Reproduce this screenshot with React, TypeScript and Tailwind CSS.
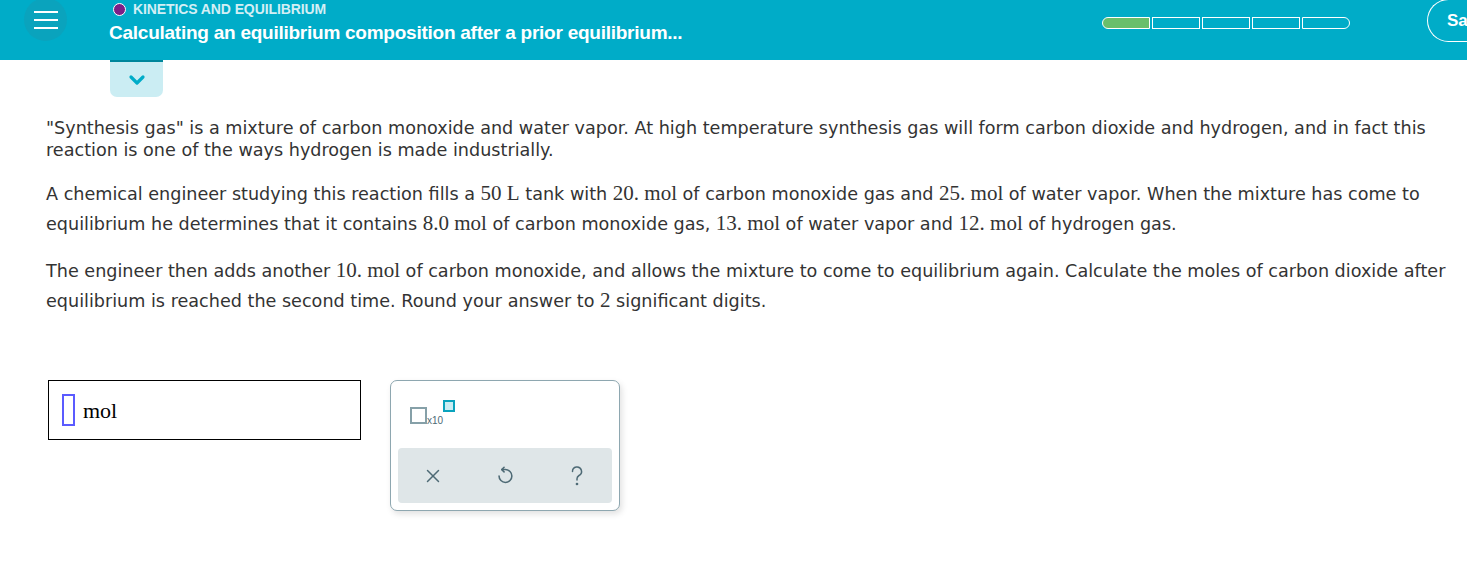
import { ChevronDown, X } from 'lucide-react';

const serif = "[font-family:'Liberation_Serif',serif] text-[21px] leading-none text-[#333]";

function M({ children }: { children: React.ReactNode }) {
  return <span className={serif}>{children}</span>;
}

export default function App() {
  return (
    <div className="min-h-[562px] w-full overflow-hidden bg-white">
      {/* top bar */}
      <header className="flex h-[60px] items-start bg-[#00acc8] [font-family:'Liberation_Sans',sans-serif]">
        <div className="ml-[24px] -mt-[2px] flex h-[43px] w-[43px] items-center justify-center rounded-full bg-[#0aa3bd]">
          <div className="flex flex-col gap-[6px]">
            <span className="block h-[2px] w-[24px] bg-white" />
            <span className="block h-[2px] w-[24px] bg-white" />
            <span className="block h-[2px] w-[24px] bg-white" />
          </div>
        </div>
        <div className="ml-[42px] pt-[1px]">
          <div className="flex items-center gap-[7px] pl-[4px]">
            <span className="block h-[13px] w-[13px] rounded-full border border-white bg-[#7b1f87]" />
            <span className="text-[14px] font-bold leading-[16px] tracking-[-0.1px] text-[#d3eff5]">KINETICS AND EQUILIBRIUM</span>
          </div>
          <div className="mt-[5px] text-[19px] font-bold leading-[22px] tracking-[-0.25px] text-white">
            Calculating an equilibrium composition after a prior equilibrium...
          </div>
        </div>
        <div className="ml-auto mt-[17px] flex h-[12px] gap-[2px]">
          <span className="block h-full w-[48px] rounded-l-full border border-white bg-[#68bf6b]" />
          <span className="block h-full w-[48px] border border-white" />
          <span className="block h-full w-[48px] border border-white" />
          <span className="block h-full w-[48px] border border-white" />
          <span className="block h-full w-[48px] rounded-r-full border border-white" />
        </div>
        <div className="ml-[77px] -mt-[1px] flex h-[43px] w-[40px] items-center rounded-l-full border border-r-0 border-white pl-[19px] text-[17px] font-bold text-white">
          Sa
        </div>
      </header>

      {/* dropdown tab */}
      <div className="ml-[110px] flex h-[37px] w-[53px] items-center justify-center rounded-b-[7px] border-t-2 border-[#00869b] bg-[#cbedf3]">
        <ChevronDown className="h-[24px] w-[24px] text-[#00acc8]" strokeWidth={3.2} />
      </div>

      {/* question text */}
      <div className="pl-[46px] pr-[4px] pt-[20px] text-[17.6px] text-[#333] [font-family:'DejaVu_Sans',sans-serif]">
        <p className="leading-[22px]">
          "Synthesis gas" is a mixture of carbon monoxide and water vapor. At high temperature synthesis gas will form carbon dioxide and hydrogen, and in fact this reaction is one of the ways hydrogen is made industrially.
        </p>
        <p className="mt-[18px] leading-[30px]">
          A chemical engineer studying this reaction fills a <M>50 L</M> tank with <M>20. mol</M> of carbon monoxide gas and <M>25. mol</M> of water vapor. When the mixture has come to equilibrium he determines that it contains <M>8.0 mol</M> of carbon monoxide gas, <M>13. mol</M> of water vapor and <M>12. mol</M> of hydrogen gas.
        </p>
        <p className="mt-[17px] leading-[30px]">
          The engineer then adds another <M>10. mol</M> of carbon monoxide, and allows the mixture to come to equilibrium again. Calculate the moles of carbon dioxide after equilibrium is reached the second time. Round your answer to <M>2</M> significant digits.
        </p>
      </div>

      {/* answer area */}
      <div className="mt-[64px] flex items-start pl-[48px]">
        <div className="flex h-[60px] w-[313px] items-center border border-black pl-[13px]">
          <span className="block h-[32px] w-[13px] border-2 border-[#5b5bff]" />
          <span className="ml-[8px] [font-family:'Liberation_Serif',serif] text-[22px] text-black">mol</span>
        </div>

        <div className="ml-[29px] flex h-[131px] w-[230px] flex-col rounded-[7px] border border-[#8ea7b0] bg-white px-[7px] pb-[7px] shadow-[2px_3px_6px_rgba(0,0,0,0.12)]">
          <div className="flex h-[67px] items-start pl-[12px] pt-[19px]">
            <span className="mt-[7px] block h-[17px] w-[17px] border-2 border-[#86a0a8]" />
            <span className="mt-[16px] [font-family:'Liberation_Sans',sans-serif] text-[10px] leading-none text-[#4e6a75]">x10</span>
            <span className="block h-[12px] w-[12px] border-2 border-[#0aa3bd] bg-[#cbedf3]" />
          </div>
          <div className="flex flex-1 items-center gap-[48px] rounded-[4px] bg-[#dfe6e8] pl-[23px] text-[#4e6a75]">
            <span className="flex w-[24px] justify-center">
              <X className="h-[22px] w-[22px]" strokeWidth={1.6} />
            </span>
            <span className="flex w-[24px] justify-center">
              <svg viewBox="0 0 24 24" className="h-[22px] w-[22px]" fill="none" stroke="currentColor" strokeWidth={1.7} strokeLinecap="round" strokeLinejoin="round">
                <path d="M11 2.5 L8.5 5 L11 7.5" />
                <path d="M8.5 5 H12.5 A7 7 0 1 1 5.5 12" />
              </svg>
            </span>
            <span className="flex w-[24px] justify-center">
              <svg viewBox="0 0 24 24" className="h-[26px] w-[26px]" fill="none" stroke="currentColor" strokeWidth={1.5} strokeLinecap="round">
                <path d="M7.5 7.5 A4.5 4.5 0 1 1 14 11.5 C12.7 12.3 12 13.2 12 14.8 V16" />
                <circle cx="12" cy="20" r="0.6" fill="currentColor" />
              </svg>
            </span>
          </div>
        </div>
      </div>
    </div>
  );
}
